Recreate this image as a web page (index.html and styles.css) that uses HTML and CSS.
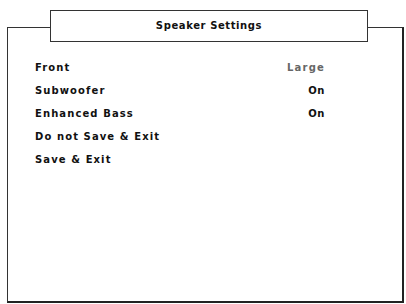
FILE: index.html
```html
<!DOCTYPE html>
<html lang="en">
<head>
    <meta charset="UTF-8">
    <title>Speaker Settings</title>
    <link rel="stylesheet" href="styles.css">
</head>
<body>
    <div class="panel">
        <div class="title-box">Speaker Settings</div>
        <ul class="menu">
            <li class="menu-row"><span>Front</span><span class="value dim">Large</span></li>
            <li class="menu-row"><span>Subwoofer</span><span class="value">On</span></li>
            <li class="menu-row"><span>Enhanced Bass</span><span class="value">On</span></li>
            <li class="menu-row"><span>Do not Save &amp; Exit</span></li>
            <li class="menu-row"><span>Save &amp; Exit</span></li>
        </ul>
    </div>
</body>
</html>
```

FILE: styles.css
```css
body {
    margin: 0;
    background: white;
    font-family: "DejaVu Sans", sans-serif;
    font-weight: bold;
    font-size: 10px;
    color: #111;
}
.panel {
    margin: 27px 0 0 7px;
    width: 394px;
    height: 273px;
    border: 1px solid #333;
    border-right: 2px solid #222;
    border-bottom: 2px solid #222;
}
.title-box {
    width: 316px;
    height: 30px;
    margin: -18px 0 0 42px;
    border: 1px solid #333;
    background: white;
    line-height: 30px;
    text-align: center;
    letter-spacing: 0.6px;
}
.menu {
    list-style: none;
    margin: 14px 0 0 0;
    padding: 0 77px 0 27px;
}
.menu-row {
    display: flex;
    justify-content: space-between;
    height: 23px;
    line-height: 23px;
    letter-spacing: 1.1px;
}
.value {
    letter-spacing: 0.6px;
}
.dim {
    color: #666;
    letter-spacing: 1.2px;
}
```
